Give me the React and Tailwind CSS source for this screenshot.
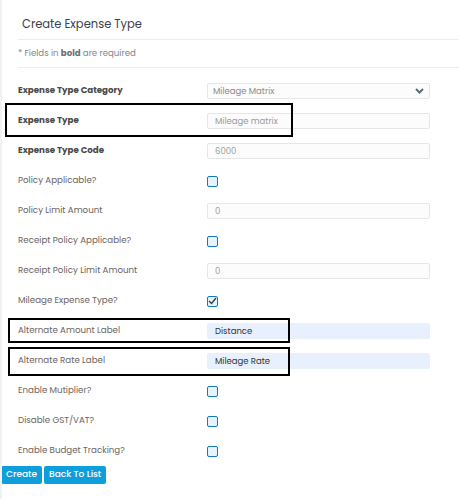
import React from "react";

const font = { fontFamily: "Poppins, 'DejaVu Sans', sans-serif" };

function Label({ children, bold }) {
  return (
    <div
      className={
        "w-[189px] shrink-0 text-[8.7px] " +
        (bold ? "font-bold text-[#4a4a4a]" : "text-[#6b6461]")
      }
    >
      {children}
    </div>
  );
}

function TextInput({ value, blue }) {
  return (
    <div
      className={
        "w-[223px] h-[16px] rounded-[2px] border flex items-center pl-[7px] text-[8.5px] " +
        (blue
          ? "bg-[#e8f0fe] border-[#e8f0fe] text-[#333333]"
          : "bg-[#fcfcfc] border-[#e6e6e6] text-[#9a9a9a]")
      }
    >
      {value}
    </div>
  );
}

function Select({ value }) {
  return (
    <div className="w-[223px] h-[16px] rounded-[2px] border border-[#e6e6e6] bg-[#fcfcfc] flex items-center justify-between pl-[5px] pr-[5px] text-[8.5px] text-[#8a8a8a]">
      <span>{value}</span>
      <svg width="9" height="6" viewBox="0 0 9 6">
        <path d="M1 1 L4.5 4.5 L8 1" stroke="#5b6b7a" strokeWidth="2" fill="none" />
      </svg>
    </div>
  );
}

function Checkbox({ checked }) {
  return (
    <div className="w-[11px] h-[11px] rounded-[2px] border-[1.5px] border-[#1577be] bg-[#e6f3fb] flex items-center justify-center">
      {checked && (
        <svg width="9" height="8" viewBox="0 0 9 8">
          <path d="M1 4 L3.5 6.5 L8 1" stroke="#2c3e50" strokeWidth="1.3" fill="none" />
        </svg>
      )}
    </div>
  );
}

function Row({ label, bold, children }) {
  return (
    <div className="h-[30px] flex items-center">
      <Label bold={bold}>{label}</Label>
      {children}
    </div>
  );
}

export default function App() {
  return (
    <div className="w-[459px] h-[499px] bg-white relative overflow-hidden" style={font}>
      <div className="absolute left-0 top-0 bottom-0 w-[2px] bg-[#f2f2f2]" />
      <div className="pl-[18px]">
        <div className="h-[40px] border-b border-[#eeeeee] flex items-center pl-[4px] pt-[10px] text-[11.5px] text-[#3c4050]">
          Create Expense Type
        </div>
        <div className="h-[28px] border-b border-[#eeeeee] flex items-center text-[8.6px] text-[#7d8590]">
          <span>
            * Fields in <b className="font-bold text-[#6a7078]">bold</b> are required
          </span>
        </div>
        <div className="mt-[8px]">
          <Row label="Expense Type Category" bold>
            <Select value="Mileage Matrix" />
          </Row>
          <Row label="Expense Type" bold>
            <TextInput value="Mileage matrix" />
          </Row>
          <Row label="Expense Type Code" bold>
            <TextInput value="6000" />
          </Row>
          <Row label="Policy Applicable?">
            <Checkbox />
          </Row>
          <Row label="Policy Limit Amount">
            <TextInput value="0" />
          </Row>
          <Row label="Receipt Policy Applicable?">
            <Checkbox />
          </Row>
          <Row label="Receipt Policy Limit Amount">
            <TextInput value="0" />
          </Row>
          <Row label="Mileage Expense Type?">
            <Checkbox checked />
          </Row>
          <Row label="Alternate Amount Label">
            <TextInput value="Distance" blue />
          </Row>
          <Row label="Alternate Rate Label">
            <TextInput value="Mileage Rate" blue />
          </Row>
          <Row label="Enable Mutiplier?">
            <Checkbox />
          </Row>
          <Row label="Disable GST/VAT?">
            <Checkbox />
          </Row>
          <Row label="Enable Budget Tracking?">
            <Checkbox />
          </Row>
        </div>
      </div>
      <div className="flex gap-[2px] pl-[1px]">
        <button className="h-[18px] px-[5px] rounded-[2px] bg-[#0c9fdc] text-white text-[9px] font-medium">
          Create
        </button>
        <button className="h-[18px] px-[5px] rounded-[2px] bg-[#0c9fdc] text-white text-[9px] font-medium">
          Back To List
        </button>
      </div>
      <div className="absolute left-[5px] top-[103px] w-[288px] h-[34px] border-2 border-black" />
      <div className="absolute left-[8px] top-[318px] w-[282px] h-[25px] border-2 border-black" />
      <div className="absolute left-[8px] top-[347px] w-[282px] h-[29px] border-2 border-black" />
    </div>
  );
}
